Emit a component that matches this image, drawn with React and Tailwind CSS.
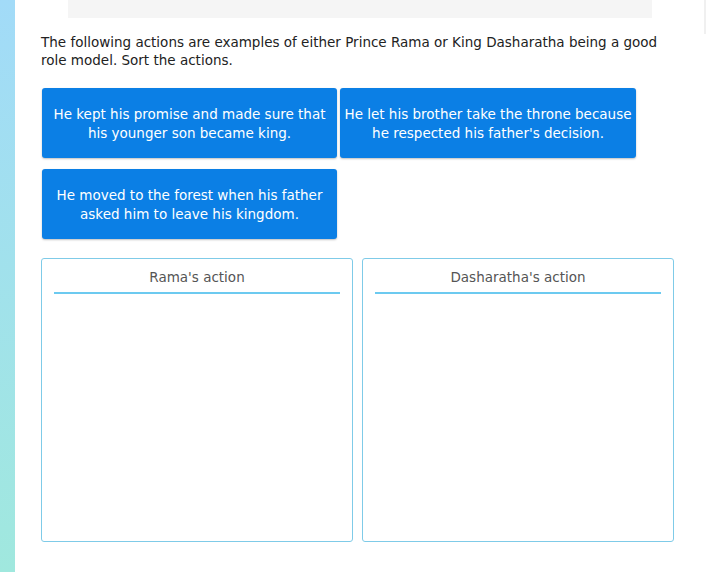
export default function App() {
  const font = { fontFamily: '"DejaVu Sans", Verdana, sans-serif' };
  const cards = [
    "He kept his promise and made sure that his younger son became king.",
    "He let his brother take the throne because he respected his father's decision.",
    "He moved to the forest when his father asked him to leave his kingdom.",
  ];
  return (
    <div className="flex w-[706px] h-[572px] bg-white overflow-hidden" style={font}>
      <div className="w-[15px] shrink-0 bg-gradient-to-b from-[#a2dbf8] to-[#a0e8de]" />
      <div className="relative flex-1 flex flex-col">
        <div className="ml-[53px] w-[584px] h-[18px] bg-[#f5f5f5] shrink-0" />
        <div className="absolute right-0 top-0 w-[2px] h-[34px] bg-[#f0f0f0]" />
        <p className="mt-[15px] ml-[26px] w-[630px] text-[13.5px] leading-[18px] text-[#222]">
          The following actions are examples of either Prince Rama or King Dasharatha being a good role model. Sort the actions.
        </p>
        <div className="mt-[19px] ml-[27px] grid grid-cols-[295px_296px] gap-x-[3px] gap-y-[11px]">
          {cards.map((c) => (
            <div
              key={c}
              className="h-[70px] flex items-center justify-center text-center px-[3px] pt-[2px] rounded-[3px] bg-[#0b7fe5] text-white text-[13.5px] leading-[19px] shadow-[0_1px_2px_rgba(0,0,0,0.25)]"
            >
              {c}
            </div>
          ))}
        </div>
        <div className="mt-[19px] ml-[26px] flex gap-[9px]">
          {["Rama's action", "Dasharatha's action"].map((t) => (
            <div key={t} className="w-[312px] h-[284px] border border-[#7fcbe8] rounded-[3px] px-[12px]">
              <div className="text-center text-[13.5px] leading-[18px] text-[#555] pt-[9px] pb-[6px] border-b-2 border-[#6ccaf0]">
                {t}
              </div>
            </div>
          ))}
        </div>
      </div>
    </div>
  );
}
